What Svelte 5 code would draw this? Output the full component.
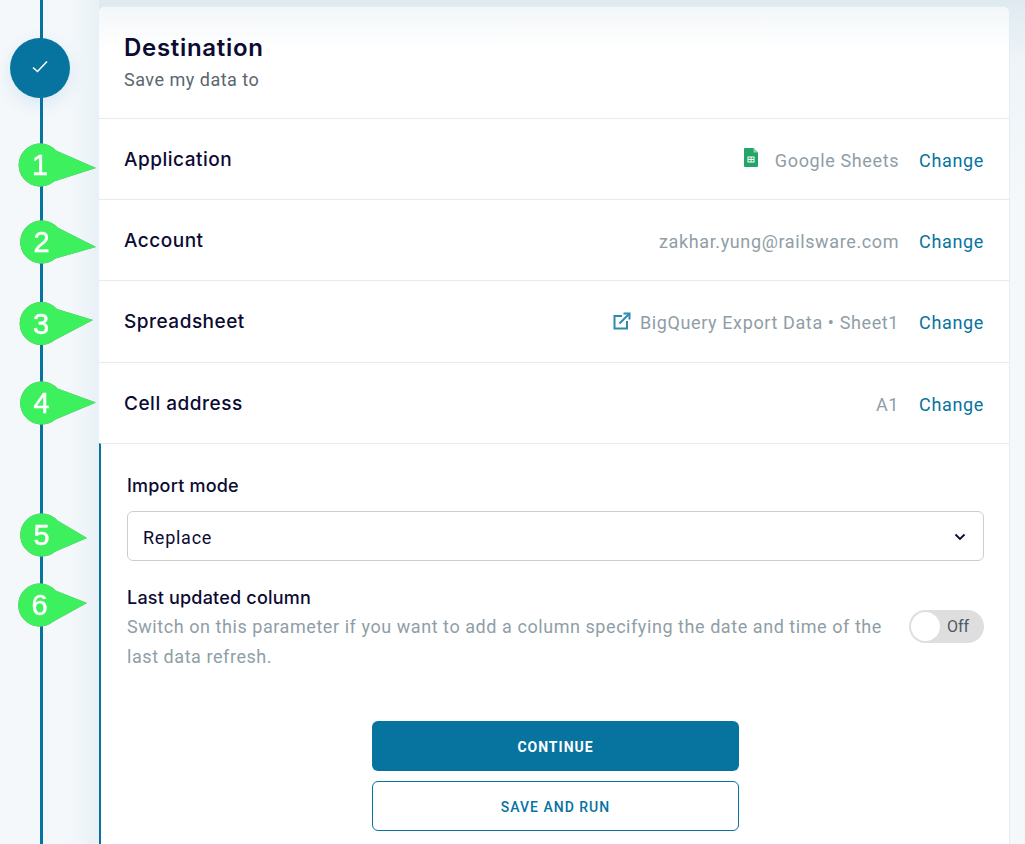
<script>
  const callouts = [
    { n: 1, cx: 40, cy: 165.5, tx: 96, ty: 168 },
    { n: 2, cx: 41.5, cy: 242.5, tx: 96, ty: 247 },
    { n: 3, cx: 41, cy: 324, tx: 93, ty: 320 },
    { n: 4, cx: 41.5, cy: 403.5, tx: 96, ty: 402.5 },
    { n: 5, cx: 41.5, cy: 535.5, tx: 87, ty: 538 },
    { n: 6, cx: 39.5, cy: 605.5, tx: 87, ty: 603 }
  ];
  const shape = (c) =>
    `M${c.cx + 16} ${c.cy - 15} L${c.tx} ${c.ty} L${c.cx + 14} ${c.cy + 16} A21.5 21.5 0 1 1 ${c.cx + 16} ${c.cy - 15} Z`;
  const rows = [
    { label: 'Application', value: 'Google Sheets', icon: 'sheets' },
    { label: 'Account', value: 'zakhar.yung@railsware.com' },
    { label: 'Spreadsheet', value: 'BigQuery Export Data • Sheet1', icon: 'link' },
    { label: 'Cell address', value: 'A1' }
  ];
</script>

<div class="page">
  <aside class="rail">
    <div class="step">
      <svg width="16" height="16" viewBox="0 0 16 16" fill="none">
        <path d="M1 7.5 L5.5 11.5 L15 1.5" stroke="#fff" stroke-width="1.6" />
      </svg>
    </div>
  </aside>

  <main class="card">
    <header class="head">
      <h1>Destination</h1>
      <p>Save my data to</p>
    </header>

    {#each rows as row}
      <div class="row">
        <span class="label">{row.label}</span>
        <span class="value">
          {#if row.icon === 'sheets'}
            <svg class="sheets" width="14" height="19" viewBox="0 0 14 19">
              <path d="M1 0 H9.5 L14 4.5 V18 a1 1 0 0 1 -1 1 H1 a1 1 0 0 1 -1 -1 V1 a1 1 0 0 1 1 -1 Z" fill="#23a566" />
              <path d="M9.5 0 L14 4.5 H9.5 Z" fill="#8ed1b1" />
              <path d="M3.5 8.5 H10.5 V14.5 H3.5 Z M4.5 9.5 V11 H6.5 V9.5 Z M7.5 9.5 V11 H9.5 V9.5 Z M4.5 12 V13.5 H6.5 V12 Z M7.5 12 V13.5 H9.5 V12 Z" fill="#fff" fill-rule="evenodd" />
            </svg>
          {:else if row.icon === 'link'}
            <svg class="link" width="18" height="18" viewBox="0 0 18 18" fill="none" stroke="#2e8ab0" stroke-width="2">
              <path d="M9 4 H1.5 V16.5 H14 V9" />
              <path d="M6.5 11.5 L16 2" />
              <path d="M10.5 1.5 H16.5 V7.5" />
            </svg>
          {/if}
          {row.value}
        </span>
        <span class="change">Change</span>
      </div>
    {/each}

    <section class="form">
      <div class="field-label">Import mode</div>
      <div class="select">
        <span>Replace</span>
        <svg width="12" height="8" viewBox="0 0 12 8" fill="none">
          <path d="M1.5 1.5 L6 6 L10.5 1.5" stroke="#0b0b33" stroke-width="1.8" />
        </svg>
      </div>

      <div class="toggle-row">
        <div class="toggle-text">
          <div class="field-label tight">Last updated column</div>
          <p>Switch on this parameter if you want to add a column specifying the date and time of the last data refresh.</p>
        </div>
        <div class="toggle">
          <span class="knob"></span>
          <span class="off">Off</span>
        </div>
      </div>

      <div class="actions">
        <button class="btn primary">CONTINUE</button>
        <button class="btn outline">SAVE AND RUN</button>
      </div>
    </section>
  </main>

  <svg class="callouts" width="110" height="844" viewBox="0 0 110 844">
    {#each callouts as c}
      <g class="callout">
        <path d={shape(c)} fill="#3cf05e" />
        <text x={c.cx} y={c.cy + 9.5} text-anchor="middle">{c.n}</text>
      </g>
    {/each}
  </svg>
</div>

<style>
  :global(body) {
    margin: 0;
    background: #f2f7fa;
  }
  .page {
    position: relative;
    display: flex;
    width: 1025px;
    height: 844px;
    overflow: hidden;
    box-sizing: border-box;
    padding: 7px 16px 0 0;
    background: linear-gradient(#dfeaf0 0, #eef4f8 60px, #f4f8fb 200px);
    font-family: "Inter", "Liberation Sans", sans-serif;
    color: #0b0b33;
  }
  .rail {
    position: relative;
    flex: 0 0 99px;
    margin-top: -7px;
    background: linear-gradient(90deg, #f4f8fb 70%, #e9f1f6 100%);
  }
  .rail::before {
    content: "";
    position: absolute;
    left: 40px;
    top: 0;
    bottom: 0;
    width: 3px;
    background: #07739f;
  }
  .step {
    position: absolute;
    left: 10px;
    top: 38px;
    width: 60px;
    height: 60px;
    border-radius: 50%;
    background: #07739f;
    box-shadow: 0 6px 18px rgba(7, 115, 159, 0.12);
    display: flex;
    align-items: center;
    justify-content: center;
  }
  .card {
    flex: 1;
    background: #fff;
    border-radius: 6px 6px 0 0;
    box-shadow: 0 0 0 1px #e3edf2;
    min-width: 0;
  }
  .head {
    height: 111px;
    box-sizing: border-box;
    padding: 27px 25px 0;
    background: linear-gradient(#f3f7f9 0, #fff 45px);
    border-radius: 6px 6px 0 0;
  }
  h1 {
    margin: 0;
    font-size: 24px;
    line-height: 28px;
    font-weight: 600;
    letter-spacing: 0.7px;
  }
  .head p {
    margin: 6px 0 0;
    font-family: "Roboto", sans-serif;
    font-size: 18px;
    line-height: 24px;
    letter-spacing: 0.5px;
    color: #5a6670;
  }
  .row {
    display: flex;
    align-items: center;
    height: 81px;
    box-sizing: border-box;
    border-top: 1px solid #e5ebee;
    padding: 0 25px;
  }
  .row:nth-of-type(3) {
    height: 82px;
  }
  .label {
    flex: 1;
    font-size: 19px;
    font-weight: 500;
    letter-spacing: 0.5px;
  }
  .value {
    display: flex;
    align-items: center;
    margin-top: 2px;
    font-family: "Roboto", sans-serif;
    font-size: 18px;
    letter-spacing: 0.62px;
    color: #8f9ea6;
  }
  .sheets {
    margin: -6px 17px 0 0;
  }
  .link {
    margin: -4px 9px 0 0;
  }
  .change {
    margin: 2px 0 0 20px;
    font-family: "Roboto", sans-serif;
    font-size: 18px;
    letter-spacing: 0.65px;
    color: #07739f;
  }
  .form {
    border-top: 1px solid #e5ebee;
    border-left: 2px solid #07739f;
    padding: 30px 25px 0 26px;
    height: 402px;
    box-sizing: border-box;
    position: relative;
  }
  .field-label {
    font-size: 18px;
    font-weight: 500;
    line-height: 24px;
    letter-spacing: 0.2px;
    margin-bottom: 13px;
  }
  .field-label.tight {
    margin-bottom: 0;
  }
  .select {
    display: flex;
    align-items: center;
    justify-content: space-between;
    height: 50px;
    box-sizing: border-box;
    border: 1px solid #c5d0d6;
    border-radius: 6px;
    padding: 2px 17px 0 15px;
    font-family: "Roboto", sans-serif;
    font-size: 18px;
    letter-spacing: 0.75px;
  }
  .toggle-row {
    display: flex;
    align-items: flex-start;
    gap: 24px;
    margin-top: 25px;
  }
  .toggle-text {
    flex: 1;
  }
  .toggle-text p {
    margin: 2px 0 0;
    font-family: "Roboto", sans-serif;
    font-size: 18px;
    line-height: 30px;
    letter-spacing: 0.56px;
    color: #8f9ea6;
  }
  .toggle {
    display: flex;
    align-items: center;
    flex: none;
    margin-top: 24px;
    width: 75px;
    height: 33px;
    box-sizing: border-box;
    padding: 2px;
    border-radius: 17px;
    background: #dedede;
  }
  .knob {
    width: 29px;
    height: 29px;
    border-radius: 50%;
    background: #fff;
  }
  .off {
    margin-left: 7px;
    font-family: "Roboto", sans-serif;
    font-size: 16px;
    color: #4a5a66;
  }
  .actions {
    display: flex;
    flex-direction: column;
    align-items: center;
    gap: 10px;
    margin-top: 49px;
  }
  .btn {
    width: 367px;
    height: 50px;
    padding-top: 3px;
    border-radius: 6px;
    font-family: "Roboto", sans-serif;
    font-size: 14px;
    font-weight: 700;
    letter-spacing: 1px;
    box-sizing: border-box;
  }
  .primary {
    background: #07739f;
    border: 0;
    color: #fff;
  }
  .outline {
    background: #fff;
    border: 1px solid #07739f;
    color: #07739f;
    font-weight: 500;
  }
  .callouts {
    position: absolute;
    left: 0;
    top: 0;
    pointer-events: none;
  }
  .callout {
    filter: drop-shadow(0.7px 0.7px 0 #8a8a8a);
  }
  .callout text {
    font-family: "Liberation Sans", sans-serif;
    font-size: 29px;
    fill: #fff;
    stroke: #fff;
    stroke-width: 0.5px;
  }
</style>
